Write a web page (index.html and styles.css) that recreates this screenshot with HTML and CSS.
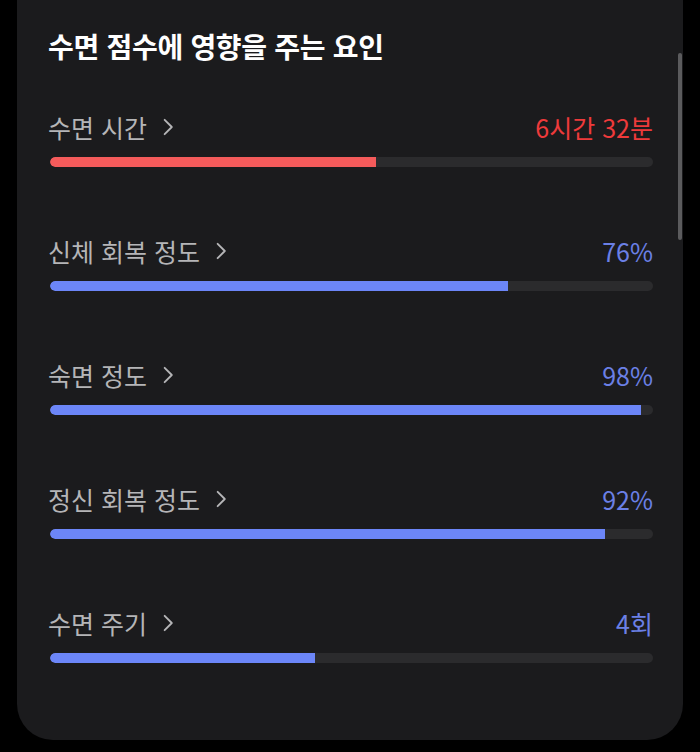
FILE: index.html
```html
<!DOCTYPE html>
<html lang="ko">
<head>
    <meta charset="UTF-8">
    <meta name="viewport" content="width=device-width, initial-scale=1.0">
    <title>수면 점수</title>
    <link rel="stylesheet" href="styles.css">
</head>
<body>
    <div class="card">
        <h2 class="card-title">수면 점수에 영향을 주는 요인</h2>
        <div class="factor-list">
            <div class="factor">
                <div class="factor-head">
                    <span class="factor-label">수면 시간 <svg class="chevron" viewBox="0 0 10 16"><polyline points="1.5,1.5 8,8 1.5,14.5"/></svg></span>
                    <span class="factor-value red">6시간 32분</span>
                </div>
                <div class="track"><div class="fill red" style="width: 54%"></div></div>
            </div>
            <div class="factor">
                <div class="factor-head">
                    <span class="factor-label">신체 회복 정도 <svg class="chevron" viewBox="0 0 10 16"><polyline points="1.5,1.5 8,8 1.5,14.5"/></svg></span>
                    <span class="factor-value">76%</span>
                </div>
                <div class="track"><div class="fill" style="width: 76%"></div></div>
            </div>
            <div class="factor">
                <div class="factor-head">
                    <span class="factor-label">숙면 정도 <svg class="chevron" viewBox="0 0 10 16"><polyline points="1.5,1.5 8,8 1.5,14.5"/></svg></span>
                    <span class="factor-value">98%</span>
                </div>
                <div class="track"><div class="fill" style="width: 98%"></div></div>
            </div>
            <div class="factor">
                <div class="factor-head">
                    <span class="factor-label">정신 회복 정도 <svg class="chevron" viewBox="0 0 10 16"><polyline points="1.5,1.5 8,8 1.5,14.5"/></svg></span>
                    <span class="factor-value">92%</span>
                </div>
                <div class="track"><div class="fill" style="width: 92%"></div></div>
            </div>
            <div class="factor">
                <div class="factor-head">
                    <span class="factor-label">수면 주기 <svg class="chevron" viewBox="0 0 10 16"><polyline points="1.5,1.5 8,8 1.5,14.5"/></svg></span>
                    <span class="factor-value">4회</span>
                </div>
                <div class="track"><div class="fill" style="width: 44%"></div></div>
            </div>
        </div>
        <div class="scrollbar"></div>
    </div>
</body>
</html>
```

FILE: styles.css
```css
body {
    margin: 0;
    background: #000;
    font-family: "Noto Sans CJK KR", "Noto Sans", sans-serif;
}

.card {
    position: relative;
    margin: 0 17px;
    height: 740px;
    box-sizing: border-box;
    padding: 28px 30px 0 33px;
    background: #1b1b1d;
    border-radius: 0 0 36px 36px;
}

.card-title {
    margin: 0;
    font-size: 28px;
    line-height: 36px;
    font-weight: 700;
    color: #fff;
    margin-left: -2px;
    letter-spacing: -0.3px;
}

.factor-list {
    display: flex;
    flex-direction: column;
    gap: 67px;
    margin-top: 46px;
}

.factor-head {
    display: flex;
    justify-content: space-between;
    align-items: center;
    height: 34px;
    margin-bottom: 13px;
}

.factor-label {
    display: flex;
    align-items: center;
    gap: 16px;
    margin-left: -2px;
    font-size: 25px;
    color: #b5b5b7;
}

.chevron {
    width: 11px;
    height: 18px;
    fill: none;
    stroke: #b5b5b7;
    stroke-width: 1.7;
    stroke-linecap: round;
    stroke-linejoin: round;
}

.factor-value {
    font-size: 25px;
    color: #6b80e6;
}

.factor-value.red {
    color: #ee3a3b;
}

.track {
    height: 10px;
    border-radius: 5px;
    background: #2b2b2d;
    overflow: hidden;
}

.fill {
    height: 100%;
    border-radius: 5px 0 0 5px;
    background: #6c86f8;
}

.fill.red {
    background: #f55b5b;
}

.scrollbar {
    position: absolute;
    top: 53px;
    right: 1px;
    width: 4px;
    height: 187px;
    border-radius: 2px;
    background: #5b5b5d;
}
```
